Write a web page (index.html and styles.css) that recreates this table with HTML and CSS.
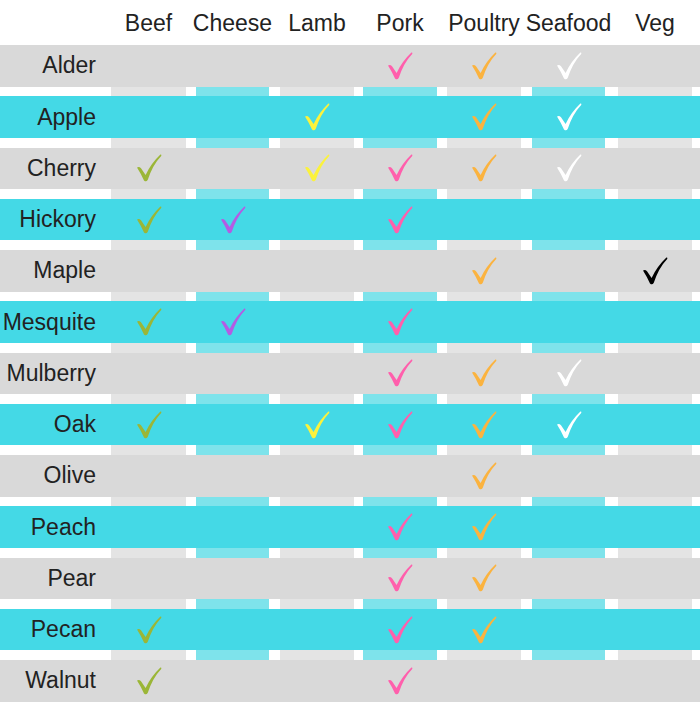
FILE: index.html
```html
<!DOCTYPE html>
<html lang="en">
<head>
<meta charset="utf-8">
<title>Wood pairing chart</title>
<link rel="stylesheet" href="styles.css">
</head>
<body>
<svg class="defs" width="0" height="0" aria-hidden="true">
  <symbol id="chk" viewBox="0 0 26 28">
    <path d="M1,13.6 Q3,12.2 5,14.2 L9.6,21 Q15,9.5 24.4,0.6 Q25.8,0.3 25.2,1.9 Q16.5,11 11.8,25.8 Q10.2,28.6 8,26.4 Q5,20 1,13.6 Z"/>
  </symbol>
</svg>
<div class="chart">
  <div class="head">
    <div class="h-label"></div>
    <div class="h c1"><span>Beef</span></div>
    <div class="h c2"><span>Cheese</span></div>
    <div class="h c3"><span>Lamb</span></div>
    <div class="h c4"><span>Pork</span></div>
    <div class="h c5"><span>Poultry</span></div>
    <div class="h c6"><span>Seafood</span></div>
    <div class="h c7"><span>Veg</span></div>
  </div>
  <div class="body">
    <div class="band b1 light-grey"></div>
    <div class="band b2 light-cyan"></div>
    <div class="band b3 light-grey"></div>
    <div class="band b4 light-cyan"></div>
    <div class="band b5 light-grey"></div>
    <div class="band b6 light-cyan"></div>
    <div class="band b7 light-grey"></div>

    <div class="row grey r1"><div class="name">Alder</div>
      <div class="cell c4"><svg class="k pork"><use href="#chk"/></svg></div>
      <div class="cell c5"><svg class="k poultry"><use href="#chk"/></svg></div>
      <div class="cell c6"><svg class="k seafood"><use href="#chk"/></svg></div>
    </div>
    <div class="row cyan r2"><div class="name">Apple</div>
      <div class="cell c3"><svg class="k lamb"><use href="#chk"/></svg></div>
      <div class="cell c5"><svg class="k poultry"><use href="#chk"/></svg></div>
      <div class="cell c6"><svg class="k seafood"><use href="#chk"/></svg></div>
    </div>
    <div class="row grey r3"><div class="name">Cherry</div>
      <div class="cell c1"><svg class="k beef"><use href="#chk"/></svg></div>
      <div class="cell c3"><svg class="k lamb"><use href="#chk"/></svg></div>
      <div class="cell c4"><svg class="k pork"><use href="#chk"/></svg></div>
      <div class="cell c5"><svg class="k poultry"><use href="#chk"/></svg></div>
      <div class="cell c6"><svg class="k seafood"><use href="#chk"/></svg></div>
    </div>
    <div class="row cyan r4"><div class="name">Hickory</div>
      <div class="cell c1"><svg class="k beef"><use href="#chk"/></svg></div>
      <div class="cell c2"><svg class="k cheese"><use href="#chk"/></svg></div>
      <div class="cell c4"><svg class="k pork"><use href="#chk"/></svg></div>
    </div>
    <div class="row grey r5"><div class="name">Maple</div>
      <div class="cell c5"><svg class="k poultry"><use href="#chk"/></svg></div>
      <div class="cell c7"><svg class="k veg"><use href="#chk"/></svg></div>
    </div>
    <div class="row cyan r6"><div class="name">Mesquite</div>
      <div class="cell c1"><svg class="k beef"><use href="#chk"/></svg></div>
      <div class="cell c2"><svg class="k cheese"><use href="#chk"/></svg></div>
      <div class="cell c4"><svg class="k pork"><use href="#chk"/></svg></div>
    </div>
    <div class="row grey r7"><div class="name">Mulberry</div>
      <div class="cell c4"><svg class="k pork"><use href="#chk"/></svg></div>
      <div class="cell c5"><svg class="k poultry"><use href="#chk"/></svg></div>
      <div class="cell c6"><svg class="k seafood"><use href="#chk"/></svg></div>
    </div>
    <div class="row cyan r8"><div class="name">Oak</div>
      <div class="cell c1"><svg class="k beef"><use href="#chk"/></svg></div>
      <div class="cell c3"><svg class="k lamb"><use href="#chk"/></svg></div>
      <div class="cell c4"><svg class="k pork"><use href="#chk"/></svg></div>
      <div class="cell c5"><svg class="k poultry"><use href="#chk"/></svg></div>
      <div class="cell c6"><svg class="k seafood"><use href="#chk"/></svg></div>
    </div>
    <div class="row grey r9"><div class="name">Olive</div>
      <div class="cell c5"><svg class="k poultry"><use href="#chk"/></svg></div>
    </div>
    <div class="row cyan r10"><div class="name">Peach</div>
      <div class="cell c4"><svg class="k pork"><use href="#chk"/></svg></div>
      <div class="cell c5"><svg class="k poultry"><use href="#chk"/></svg></div>
    </div>
    <div class="row grey r11"><div class="name">Pear</div>
      <div class="cell c4"><svg class="k pork"><use href="#chk"/></svg></div>
      <div class="cell c5"><svg class="k poultry"><use href="#chk"/></svg></div>
    </div>
    <div class="row cyan r12"><div class="name">Pecan</div>
      <div class="cell c1"><svg class="k beef"><use href="#chk"/></svg></div>
      <div class="cell c4"><svg class="k pork"><use href="#chk"/></svg></div>
      <div class="cell c5"><svg class="k poultry"><use href="#chk"/></svg></div>
    </div>
    <div class="row grey r13"><div class="name">Walnut</div>
      <div class="cell c1"><svg class="k beef"><use href="#chk"/></svg></div>
      <div class="cell c4"><svg class="k pork"><use href="#chk"/></svg></div>
    </div>
  </div>
</div>
</body>
</html>
```
FILE: styles.css
```css
:root {
  --cols: [lab] 111px [c1] 75px 10px [c2] 73px 11px [c3] 74px 9px [c4] 74px 10px [c5] 74px 11px [c6] 73px 13px [c7] 74px 8px;
}
* { box-sizing: border-box; }
html, body {
  margin: 0;
  padding: 0;
  background: #ffffff;
}
body {
  font-family: "Liberation Sans", Arial, sans-serif;
  color: #222222;
  width: 700px;
  height: 710px;
  overflow: hidden;
}
.defs { position: absolute; width: 0; height: 0; overflow: hidden; }

.chart { width: 700px; }

.head {
  display: grid;
  grid-template-columns: var(--cols);
  height: 45px;
  align-items: center;
}
.h {
  display: flex;
  justify-content: center;
  min-width: 0;
  font-size: 23px;
  white-space: nowrap;
  line-height: 1;
  padding-top: 1px;
}
.h-label { grid-column: lab; }

.c1 { grid-column: c1; }
.c2 { grid-column: c2; }
.c3 { grid-column: c3; }
.c4 { grid-column: c4; }
.c5 { grid-column: c5; }
.c6 { grid-column: c6; }
.c7 { grid-column: c7; }

.body {
  display: grid;
  grid-template-columns: var(--cols);
  grid-template-rows: repeat(13, 41.5px);
  row-gap: 9.75px;
}
.band { grid-row: 1 / -1; }
.b1 { grid-column: c1; }
.b2 { grid-column: c2; }
.b3 { grid-column: c3; }
.b4 { grid-column: c4; }
.b5 { grid-column: c5; }
.b6 { grid-column: c6; }
.b7 { grid-column: c7; }
.light-grey { background: #e4e4e4; }
.light-cyan { background: #7ee3eb; }

.row {
  grid-column: 1 / -1;
  display: grid;
  grid-template-columns: var(--cols);
  align-items: center;
}
.grey { background: #d9d9d9; }
.cyan { background: #44d9e6; }
.r1 { grid-row: 1; }
.r2 { grid-row: 2; }
.r3 { grid-row: 3; }
.r4 { grid-row: 4; }
.r5 { grid-row: 5; }
.r6 { grid-row: 6; }
.r7 { grid-row: 7; }
.r8 { grid-row: 8; }
.r9 { grid-row: 9; }
.r10 { grid-row: 10; }
.r11 { grid-row: 11; }
.r12 { grid-row: 12; }
.r13 { grid-row: 13; }

.name {
  grid-column: lab;
  text-align: right;
  padding-right: 15px;
  font-size: 23px;
  line-height: 1;
  white-space: nowrap;
}
.cell {
  display: flex;
  justify-content: center;
  align-items: center;
}
.k {
  width: 26px;
  height: 28px;
  fill: currentColor;
}
.beef { color: #9bb637; }
.cheese { color: #b35ce4; }
.lamb { color: #fbf23c; }
.pork { color: #ff5fac; }
.poultry { color: #fbb33f; }
.seafood { color: #ffffff; }
.veg { color: #000000; }
```
